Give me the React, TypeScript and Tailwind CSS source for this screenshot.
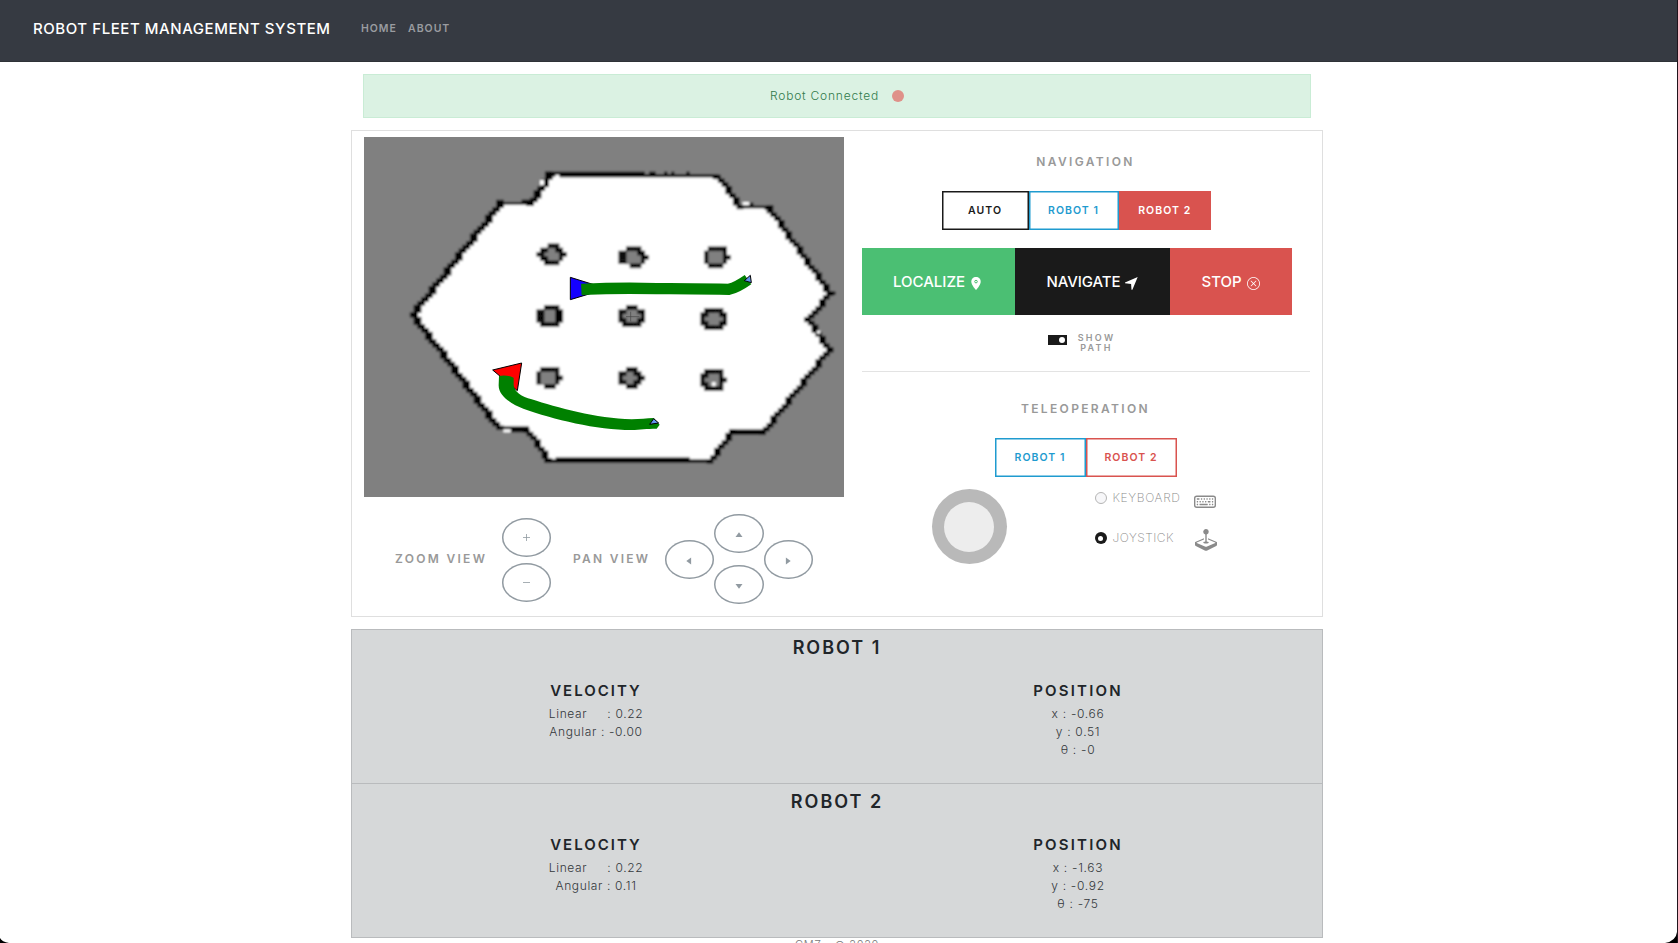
import React from "react";
import { BsKeyboard, BsJoystick, BsXCircle } from "react-icons/bs";

const CELL = 11.25;
const ROW = 12.8;

type Point = [number, number];

const diagonals: [Point, Point][] = [
  [[190, 555], [455, 215]],
  [[545, 215], [600, 130]],
  [[1108, 140], [1172, 226]],
  [[1256, 231], [1442, 490]],
  [[1440, 490], [1375, 567]],
  [[1375, 567], [1438, 660]],
  [[1438, 660], [1240, 903]],
  [[1150, 903], [1082, 998]],
  [[534, 900], [597, 990]],
  [[190, 555], [447, 897]],
];

function stepped([a, b]: [Point, Point], w: number) {
  const [top, bot] = a[1] < b[1] ? [a, b] : [b, a];
  const n = Math.max(1, Math.round((bot[1] - top[1]) / CELL));
  return Array.from({ length: n + 1 }, (_, i) => {
    const x = top[0] + ((bot[0] - top[0]) * i) / n;
    const sx = Math.round(x / CELL) * CELL;
    return { x: sx - w / 2, y: top[1] + i * CELL - CELL / 2, w };
  });
}

const pillars: { x: number; y: number; rows: string[] }[] = [
  { x: 560, y: 341, rows: ["...###..", ".##oo##.", "##oooo##", ".##ooo#.", "..####.."] },
  { x: 806, y: 350, rows: ["..####..", "##ooo##.", "##oooo##", "##oooo#.", "...###.."] },
  { x: 1063, y: 350, rows: [".#####.", "#oooo#.", "#oooo##", "#oooo#.", ".####.."] },
  { x: 560, y: 526, rows: ["..####.", "##ooo##", "##ooo##", "##ooo##", ".#####."] },
  { x: 806, y: 526, rows: ["..###..", "##ooo##", "#ooooo#", "##ooo##", ".#####."] },
  { x: 1052, y: 535, rows: [".#####.", "##ooo##", "#ooooo#", "##ooo##", ".#####."] },
  { x: 560, y: 712, rows: [".#####.", "#oooo#.", "#oooo##", "#oooo#.", "..###.."] },
  { x: 806, y: 712, rows: ["..###..", "##oo##.", "#oooo##", "##oo##.", "..###.."] },
  { x: 1052, y: 718, rows: [".#####.", "##ooo#.", "#oooo##", "##owo#.", ".#####."] },
];

const layers: { code: string; fill: string; grow: number }[] = [
  { code: "o", fill: "#808080", grow: 3 },
  { code: "w", fill: "#ffffff", grow: 0 },
  { code: "#", fill: "#000000", grow: 1 },
];

function FleetMap() {
  return (
    <svg width="480" height="360" viewBox="42 21 1440 1080" className="block bg-[#808080]">
      <filter id="soft" x="0" y="0" width="1" height="1">
        <feGaussianBlur stdDeviation="2.6" />
      </filter>
      <g filter="url(#soft)">
        <rect x="20" y="0" width="1500" height="1120" fill="#808080" />
        <polygon
          fill="#fff"
          points="600,134 1108,138 1172,230 1256,231 1442,490 1375,567 1438,660 1240,903 1150,903 1082,994 597,990 534,897 447,897 190,555 455,217 545,217"
        />
        <g fill="#000">
          <rect x="597" y="125" width="288" height="15" />
          <rect x="630" y="133" width="475" height="9" />
          <rect x="897" y="125" width="20" height="12" />
          <rect x="942" y="125" width="10" height="12" />
          <rect x="964" y="125" width="9" height="12" />
          <rect x="1009" y="125" width="10" height="12" />
          <rect x="1088" y="136" width="22" height="11" />
          <rect x="455" y="216" width="92" height="8" />
          <rect x="515" y="209" width="32" height="11" />
          <rect x="1168" y="227" width="90" height="8" />
          <rect x="1199" y="218" width="11" height="12" />
          <rect x="1244" y="228" width="21" height="12" />
          <rect x="1440" y="485" width="17" height="9" />
          <rect x="1145" y="898" width="98" height="16" />
          <rect x="445" y="889" width="92" height="9" />
          <rect x="483" y="891" width="54" height="16" />
          <rect x="617" y="982" width="402" height="16" />
          <rect x="600" y="988" width="485" height="10" />
          <rect x="583" y="984" width="22" height="15" />
          {diagonals.map((d, i) =>
            stepped(d, i === 0 || i === 1 || i === 9 ? 23 : 20).map((r, j) => (
              <rect key={`${i}-${j}`} x={r.x} y={r.y} width={r.w} height={CELL + 2} />
            )),
          )}
        </g>
        <g fill="#fff">
          <rect x="570" y="150" width="12" height="15" />
          <rect x="616" y="134" width="12" height="9" />
          <rect x="1178" y="216" width="20" height="9" />
          <rect x="460" y="898" width="22" height="9" />
          <rect x="1401" y="602" width="10" height="9" />
        </g>
        {layers.map((layer) =>
          pillars.map((p, i) =>
            p.rows.map((row, r) =>
              row.split("").map((c, k) =>
                c === layer.code ? (
                  <rect
                    key={`${i}-${r}-${k}`}
                    x={p.x + k * CELL - layer.grow / 2}
                    y={p.y + r * ROW - layer.grow / 2}
                    width={CELL + layer.grow}
                    height={ROW + layer.grow}
                    fill={layer.fill}
                  />
                ) : null,
              ),
            ),
          ),
        )}
      </g>
      <path d="M842 545V574M828 560H868" stroke="#444" strokeWidth="2" />
      <polygon points="661,442 661,509 770,476" fill="#1400ff" stroke="#000" strokeWidth="3" />
      <path d="M694 478C790 474 850 474 920 476C1000 475 1080 477 1137 478Q1160 473 1194 449" fill="none" stroke="#008000" strokeWidth="34" />
      <polygon points="428,720 515,699 502,782" fill="#ff0000" stroke="#000" strokeWidth="3" />
      <path
        d="M447 738Q468 733 491 743V765C492 785 515 800 545 808C620 832 740 866 845 868C870 868 890 864 911 864L929 884L920 896C890 896 870 899 845 900C740 900 610 868 520 836C485 822 445 798 446 765Z"
        fill="#008000"
      />
      <polygon points="1183,452 1201,436 1204,458" fill="#6495ed" stroke="#000" strokeWidth="3" />
      <polygon points="899,883 911,866 926,879" fill="#6495ed" stroke="#000" strokeWidth="3" />
    </svg>
  );
}

function RoundButton({ children }: { children: React.ReactNode }) {
  return (
    <button className="flex h-[39px] w-[49.5px] items-center justify-center rounded-[50%] text-[#919aa1] shadow-[inset_0_0_0_1.5px_#919aa1]">
      {children}
    </button>
  );
}

function Triangle({ d }: { d: string }) {
  return (
    <svg width="8" height="8" viewBox="0 0 8 8" className="mt-[3px]" fill="currentColor">
      <path d={d} />
    </svg>
  );
}

function Heading({ children }: { children: React.ReactNode }) {
  return <h2 className="text-center text-[12px] leading-[14px] font-semibold tracking-[2.35px] text-[#999]">{children}</h2>;
}

const small = "flex h-[39px] items-center justify-center pt-[1px] text-[10.5px] font-semibold tracking-[1.05px]";
const big = "flex h-[67px] items-center pt-[1px] text-[15px] font-medium text-white";
const outlineBlue = "text-[#1f9bcf] shadow-[inset_0_0_0_1.5px_#1f9bcf]";
const outlineDark = "text-[#1a1a1a] shadow-[inset_0_0_0_1.5px_#1a1a1a]";
const outlineRed = "text-[#d9534f] shadow-[inset_0_0_0_1.5px_#d9534f]";

function RobotPanel({ name, linear, angular, x, y, theta }: { name: string; linear: string; angular: string; x: string; y: string; theta: string }) {
  return (
    <section className="h-[154px] border-t border-[#b9bbbd] px-3 pt-[8px] text-center text-[#212529]">
      <h2 className="text-[18px] leading-[20px] font-semibold tracking-[2px]">{name}</h2>
      <div className="mt-[22px] grid grid-cols-2">
        <div className="pr-[9px]">
          <h3 className="text-[15px] leading-[22px] font-semibold tracking-[2px]">VELOCITY</h3>
          <div className="mt-[3px] text-[12px] leading-[18px] font-light tracking-[0.64px] whitespace-pre text-[#33373b]">
            <p>{"Linear     : " + linear}</p>
            <p>{"Angular : " + angular}</p>
          </div>
        </div>
        <div className="pl-[9px]">
          <h3 className="text-[15px] leading-[22px] font-semibold tracking-[2.2px]">POSITION</h3>
          <div className="mt-[3px] text-[12px] leading-[18px] font-light tracking-[0.7px] text-[#33373b]">
            <p>x : {x}</p>
            <p>y : {y}</p>
            <p>θ : {theta}</p>
          </div>
        </div>
      </div>
    </section>
  );
}

export default function App() {
  return (
    <div className="relative h-[943px] w-[1678px] overflow-hidden border-r border-[#20141c] bg-white font-['Inter','Liberation_Sans',sans-serif]">
      <nav className="flex h-[62px] items-center border-b border-[#2e3237] bg-[#363a42] pb-[4px] pl-[33px]">
        <span className="w-[328px] pt-[1px] text-[15px] font-medium tracking-[0.56px] whitespace-nowrap text-white">ROBOT FLEET MANAGEMENT SYSTEM</span>
        <span className="w-[47px] text-[10.5px] font-semibold tracking-[0.95px] text-[#9a9ca0]">HOME</span>
        <span className="text-[10.5px] font-semibold tracking-[1px] text-[#9a9ca0]">ABOUT</span>
      </nav>

      <main className="ml-[351px] w-[972px]">
        <div className="mx-[12px] mt-[12px] flex h-[44px] items-center justify-center border border-[#c9ecd5] bg-[#dbf2e3]">
          <span className="text-[12px] font-light tracking-[0.78px] text-[#317a4b]">Robot Connected</span>
          <span className="ml-[13px] size-[12px] rounded-full bg-[#df9189]" />
        </div>

        <section className="mt-[12px] flex h-[487px] border border-[#dfdfdf] pt-[6px]">
          <div className="ml-[12px] w-[480px]">
            <FleetMap />
            <div className="flex h-[122px] items-center">
              <span className="mt-[2px] ml-[31px] w-[106.5px] text-[12px] font-semibold tracking-[2.3px] text-[#999]">ZOOM VIEW</span>
              <div className="mt-[3px] flex flex-col gap-[6px]">
                <RoundButton><svg width="7" height="7" viewBox="0 0 7 7" className="mt-[1px]" stroke="currentColor" fill="none"><path d="M3.5 0V7M0 3.5H7" strokeWidth=".8" /></svg></RoundButton>
                <RoundButton><svg width="7" height="7" viewBox="0 0 7 7" className="mt-[1px]" stroke="currentColor" fill="none"><path d="M0 3.5H7" strokeWidth=".8" /></svg></RoundButton>
              </div>
              <span className="mt-[2px] ml-[22px] w-[91.5px] text-[12px] font-semibold tracking-[2.25px] text-[#999]">PAN VIEW</span>
              <div className="mt-[2px] flex items-center">
                <RoundButton><Triangle d="M1.3 4L6.1 .5V7.5Z" /></RoundButton>
                <div className="flex flex-col gap-[12px]">
                  <RoundButton><Triangle d="M4 1.3L7.5 6.1H.5Z" /></RoundButton>
                  <RoundButton><Triangle d="M4 6.7L.5 1.9H7.5Z" /></RoundButton>
                </div>
                <RoundButton><Triangle d="M6.7 4L1.9 .5V7.5Z" /></RoundButton>
              </div>
            </div>
          </div>

          <div className="ml-[17.5px] w-[448px]">
            <div className="pt-[18px]"><Heading>NAVIGATION</Heading></div>
            <div className="mt-[22px] ml-[80px] flex">
              <button className={`${small} w-[87px] ${outlineDark}`}>AUTO</button>
              <button className={`${small} w-[90px] ${outlineBlue}`}>ROBOT 1</button>
              <button className={`${small} w-[92.5px] bg-[#d9534f] text-white`}>ROBOT 2</button>
            </div>
            <div className="mt-[18px] flex w-[430px]">
              <button className={`${big} w-[153.5px] bg-[#4bbf73] pl-[31.5px]`}>
                LOCALIZE
                <svg width="10" height="13" viewBox="0 0 10 13" className="mt-[3px] ml-[6px]">
                  <path d="M5 0C2.2 0 .3 2.1 .3 4.7C.3 8 5 13 5 13S9.7 8 9.7 4.7C9.7 2.1 7.8 0 5 0Z" fill="#fff" />
                  <circle cx="5" cy="4.6" r="1.3" fill="none" stroke="#4bbf73" strokeWidth="1" />
                </svg>
              </button>
              <button className={`${big} w-[155px] bg-[#1a1a1a] pl-[31.5px] tracking-[-0.1px]`}>
                NAVIGATE
                <svg width="13" height="13" viewBox="0 0 13 13" className="mt-[3px] ml-[5px]">
                  <path d="M0 5.4L12.7 0L7.4 12.7H6.5L6.1 6.9L0 6.3Z" fill="#fff" />
                </svg>
              </button>
              <button className={`${big} w-[121.5px] bg-[#d9534f] pl-[31.5px]`}>
                STOP
                <BsXCircle className="mt-[3px] ml-[5px] size-[13px]" />
              </button>
            </div>
            <div className="mt-[18px] flex h-[20px] pl-[186.5px]">
              <span className="mt-[2px] flex h-[10px] w-[19px] items-center justify-end bg-[#1a1a1a] pr-[2px]"><i className="size-[6px] rounded-full bg-white" /></span>
              <span className="ml-[9px] w-[41px] text-center text-[9px] leading-[10px] font-semibold tracking-[2.3px] text-[#999]">SHOW PATH</span>
            </div>
            <hr className="mt-[18px] border-[#e3e3e3]" />
            <div className="mt-[30px]"><Heading>TELEOPERATION</Heading></div>
            <div className="mt-[22px] flex justify-center">
              <button className={`${small} w-[91px] ${outlineBlue}`}>ROBOT 1</button>
              <button className={`${small} w-[91px] ${outlineRed}`}>ROBOT 2</button>
            </div>
            <div className="mt-[12px] flex">
              <div className="ml-[70px] flex size-[75px] items-center justify-center rounded-full bg-[#b9b9b9]"><div className="size-[50px] rounded-full bg-[#ededed]" /></div>
              <div className="ml-[88px] text-[12px] font-extralight tracking-[0.65px] text-[#888]">
                <div className="flex h-[18px] items-center">
                  <span className="size-[12px] rounded-full border border-[#b5b5b5] bg-[#f7f7f9]" />
                  <span className="ml-[6px] w-[81.5px]">KEYBOARD</span>
                  <BsKeyboard className="mt-[5px] size-[22px] text-[#8a8a8a]" />
                </div>
                <div className="mt-[22px] flex h-[18px] items-center">
                  <span className="flex size-[12px] items-center justify-center rounded-full bg-[#1a1a1a]"><i className="size-[5px] rounded-full bg-white" /></span>
                  <span className="ml-[6px] w-[82.5px] tracking-[0.5px]">JOYSTICK</span>
                  <BsJoystick className="mt-[4px] size-[22px] text-[#8a8a8a]" />
                </div>
              </div>
            </div>
          </div>
        </section>

        <div className="mt-[12px] h-[309px] border-x border-b border-[#b9bbbd] bg-[#d6d8d9]">
          <RobotPanel name="ROBOT 1" linear="0.22" angular="-0.00" x="-0.66" y="0.51" theta="-0" />
          <RobotPanel name="ROBOT 2" linear="0.22" angular="0.11" x="-1.63" y="-0.92" theta="-75" />
        </div>
        <footer className="text-center text-[11px] leading-[15px] font-light tracking-[0.65px] text-[#777]">CMZ - © 2020</footer>
      </main>

      <svg width="10" height="5" className="absolute bottom-0 left-0"><path d="M0 0Q2 4 9 5H0Z" fill="#000" /></svg>
      <svg width="13" height="11" className="absolute right-0 bottom-0"><path d="M13 0Q12 9 1 11H13Z" fill="#000" /></svg>
    </div>
  );
}
